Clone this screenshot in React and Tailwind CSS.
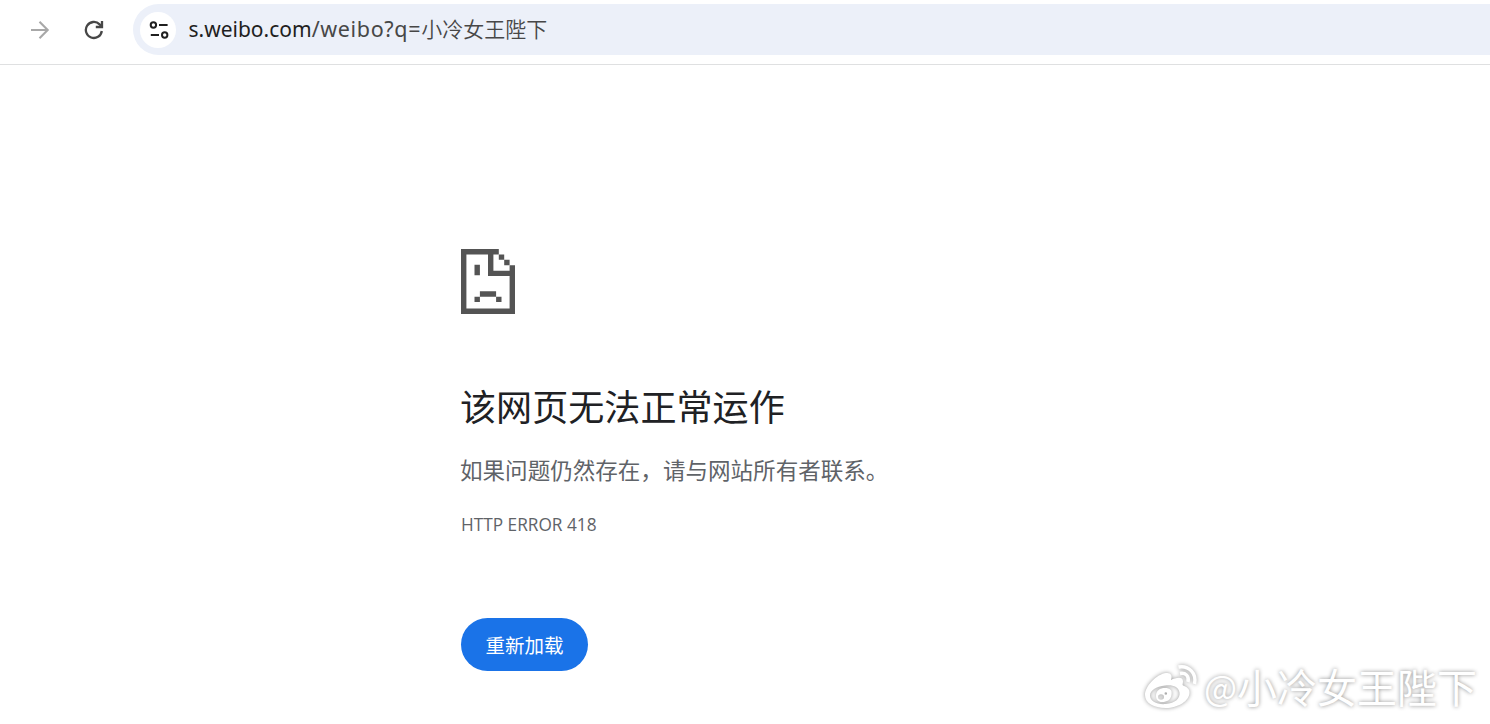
function ArrowIcon() {
  return (
    <svg width="20" height="20" viewBox="0 0 20 20" fill="none" stroke="#a8a8a8" strokeWidth="2.1">
      <path d="M1 10h17M9.500 1.800l8.200 8.200-8.200 8.200" />
    </svg>
  )
}

function ReloadIcon() {
  return (
    <svg width="20" height="20" viewBox="0 0 20 20" fill="none" stroke="#474747" strokeWidth="2.3">
      <path d="M17.800 11A8 8 0 1 1 15.600 4.400L17.600 6.500" />
      <path d="M18 1v6h-6.200" />
    </svg>
  )
}

function TuneIcon() {
  return (
    <svg width="20" height="18" viewBox="0 0 20 18" fill="none" stroke="#1f1f1f" strokeWidth="2">
      <circle cx="4.4" cy="4" r="2.700" />
      <path d="M10 4h8.600M1.800 14h8.200" />
      <circle cx="15.700" cy="14" r="2.700" />
    </svg>
  )
}

function SadPageIcon() {
  return (
    <svg width="54" height="65" viewBox="0 0 10 12" preserveAspectRatio="none" fill="#545454">
      <path d="M0 0h7v1H6v3h3V3h1v9H0zM1 1v10h8V5H5V1z" fillRule="evenodd" />
      <path d="M7 1h1v1H7zM8 2h1v1H8zM2.5 2.900h1v1.950h-1zM3.5 7.800h3v1h-3zM2.5 8.800h1v1h-1zM6.5 8.800h1v1h-1z" />
    </svg>
  )
}

function WeiboIcon() {
  return (
    <svg
      className="overflow-visible drop-shadow-[0_0_2px_rgba(0,0,0,0.4)]"
      width="54"
      height="46"
      viewBox="0 0 54 46"
    >
      <path
        fill="#fff"
        fillRule="evenodd"
        d="M1 31C1 22 13 10 22 9C27 8.400 28.500 11.500 27 16C32 13.500 39 12 39 17.500C39 19.500 38 20.500 39 21.500C42 22.500 45.500 24.500 45.500 28.500C45.500 37 34 44 22 44C10 44 1 39 1 31ZM6 31.500C6 37 13 41 22 40C31 39.500 36.500 34 35.500 28.500C34.500 23 29 20.500 21 21.500C12 22.500 6 26.500 6 31.500Z"
      />
      <path
        fill="#fff"
        fillRule="evenodd"
        d="M12 32C12 26.500 16 24 21 24C26 24 28.500 26 27.500 31C26.500 36 23 38 18 38C14.500 38 12 35.500 12 32ZM14 33a3 2.700 0 1 0 6 0a3 2.700 0 1 0-6 0ZM20.500 29.500a1.300 1.300 0 1 0 2.600 0a1.300 1.300 0 1 0-2.600 0Z"
      />
      <g fill="none" stroke="#fff" strokeWidth="3.4">
        <path d="M34.500 3C45 1 53 9.500 50.500 20" />
        <path d="M36 9.500C41.500 8.500 45.500 12 44 18" />
      </g>
    </svg>
  )
}

function Toolbar() {
  return (
    <header className="flex h-[65px] items-start border-b border-[#dfe0e1] pt-1">
      <div className="flex h-[51px] items-center gap-[34px] pl-[30px]">
        <ArrowIcon />
        <ReloadIcon />
      </div>
      <div className="ml-[29px] flex h-[51px] flex-1 items-center rounded-l-full bg-[#ecf0f9] pl-[7px]">
        <span className="flex size-9 items-center justify-center rounded-full bg-white pl-px">
          <TuneIcon />
        </span>
        <span className="ml-[12.5px] whitespace-nowrap text-[#474747]">
          <span className="font-['Noto_Sans',sans-serif] text-[21px]">
            <span className="text-[#1f1f1f]">s.weibo.com</span>
            <span className="text-[21.5px] tracking-[0.65px]">/weibo?q=</span>
          </span>
          <span className="font-['Noto_Sans_CJK_SC',sans-serif] text-[21px] font-[350]">小冷女王陛下</span>
        </span>
      </div>
    </header>
  )
}

export default function App() {
  return (
    <div className="relative flex h-[724px] flex-col overflow-hidden bg-white font-['Noto_Sans_CJK_SC',sans-serif]">
      <Toolbar />
      <main className="flex flex-col items-start pl-[461px] pt-[184px]">
        <SadPageIcon />
        <h1 className="-ml-px mt-[65px] whitespace-nowrap text-[36.1px] leading-[52px] text-[#202124]">该网页无法正常运作</h1>
        <p className="-ml-px mt-[21px] whitespace-nowrap text-[22.55px] leading-[34px] text-[#5f6368]">
          如果问题仍然存在，请与网站所有者联系。
        </p>
        <p className="mt-[26px] whitespace-nowrap font-['Open_Sans',sans-serif] text-[17.25px] leading-[26px] text-[#5f6368]">
          HTTP ERROR 418
        </p>
        <button className="mt-[80px] h-[53px] w-[127px] rounded-full bg-[#1a73e8] text-[19.5px] text-white">
          重新加载
        </button>
      </main>
      <div className="absolute bottom-[14px] right-[13px] flex items-start gap-[6px]">
        <WeiboIcon />
        <span className="-mt-px flex items-center whitespace-nowrap text-[40px] leading-[46px] text-white [text-shadow:0_0_4px_rgba(0,0,0,0.45)]">
          <span className="text-[35px]">@</span>小冷女王陛下
        </span>
      </div>
    </div>
  )
}
